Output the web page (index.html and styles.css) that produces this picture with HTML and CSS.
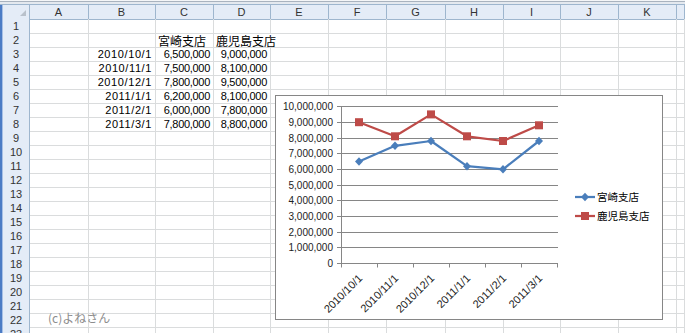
FILE: index.html
```html
<!DOCTYPE html>
<html lang="ja">
<head>
    <meta charset="UTF-8">
    <meta name="viewport" content="width=device-width, initial-scale=1.0">
    <title>支店別売上グラフ</title>
    <link rel="stylesheet" href="styles.css">
</head>
<body>
    <div class="window">
        <div class="top-edge"></div>
        <div class="book">
            <div class="left-edge"></div>
            <div class="sheet">
                <div class="row head">
                    <div class="corner"><span class="select-all"></span></div>
                    <div>A</div><div>B</div><div>C</div><div>D</div><div>E</div><div>F</div><div>G</div><div>H</div><div>I</div><div>J</div><div>K</div><div></div>
                </div>
                <div class="row"><div class="rh">1</div><div></div><div></div><div></div><div></div><div></div><div></div><div></div><div></div><div></div><div></div><div></div><div></div></div>
                <div class="row"><div class="rh">2</div><div></div><div></div><div class="jp">宮崎支店</div><div class="jp spill">鹿児島支店</div><div></div><div></div><div></div><div></div><div></div><div></div><div></div><div></div></div>
                <div class="row"><div class="rh">3</div><div></div><div class="num date">2010/10/1</div><div class="num amt">6,500,000</div><div class="num amt">9,000,000</div><div></div><div></div><div></div><div></div><div></div><div></div><div></div><div></div></div>
                <div class="row"><div class="rh">4</div><div></div><div class="num date">2010/11/1</div><div class="num amt">7,500,000</div><div class="num amt">8,100,000</div><div></div><div></div><div></div><div></div><div></div><div></div><div></div><div></div></div>
                <div class="row"><div class="rh">5</div><div></div><div class="num date">2010/12/1</div><div class="num amt">7,800,000</div><div class="num amt">9,500,000</div><div></div><div></div><div></div><div></div><div></div><div></div><div></div><div></div></div>
                <div class="row"><div class="rh">6</div><div></div><div class="num date">2011/1/1</div><div class="num amt">6,200,000</div><div class="num amt">8,100,000</div><div></div><div></div><div></div><div></div><div></div><div></div><div></div><div></div></div>
                <div class="row"><div class="rh">7</div><div></div><div class="num date">2011/2/1</div><div class="num amt">6,000,000</div><div class="num amt">7,800,000</div><div></div><div></div><div></div><div></div><div></div><div></div><div></div><div></div></div>
                <div class="row"><div class="rh">8</div><div></div><div class="num date">2011/3/1</div><div class="num amt">7,800,000</div><div class="num amt">8,800,000</div><div></div><div></div><div></div><div></div><div></div><div></div><div></div><div></div></div>
                <div class="row"><div class="rh">9</div><div></div><div></div><div></div><div></div><div></div><div></div><div></div><div></div><div></div><div></div><div></div><div></div></div>
                <div class="row"><div class="rh">10</div><div></div><div></div><div></div><div></div><div></div><div></div><div></div><div></div><div></div><div></div><div></div><div></div></div>
                <div class="row"><div class="rh">11</div><div></div><div></div><div></div><div></div><div></div><div></div><div></div><div></div><div></div><div></div><div></div><div></div></div>
                <div class="row"><div class="rh">12</div><div></div><div></div><div></div><div></div><div></div><div></div><div></div><div></div><div></div><div></div><div></div><div></div></div>
                <div class="row"><div class="rh">13</div><div></div><div></div><div></div><div></div><div></div><div></div><div></div><div></div><div></div><div></div><div></div><div></div></div>
                <div class="row"><div class="rh">14</div><div></div><div></div><div></div><div></div><div></div><div></div><div></div><div></div><div></div><div></div><div></div><div></div></div>
                <div class="row"><div class="rh">15</div><div></div><div></div><div></div><div></div><div></div><div></div><div></div><div></div><div></div><div></div><div></div><div></div></div>
                <div class="row"><div class="rh">16</div><div></div><div></div><div></div><div></div><div></div><div></div><div></div><div></div><div></div><div></div><div></div><div></div></div>
                <div class="row"><div class="rh">17</div><div></div><div></div><div></div><div></div><div></div><div></div><div></div><div></div><div></div><div></div><div></div><div></div></div>
                <div class="row"><div class="rh">18</div><div></div><div></div><div></div><div></div><div></div><div></div><div></div><div></div><div></div><div></div><div></div><div></div></div>
                <div class="row"><div class="rh">19</div><div></div><div></div><div></div><div></div><div></div><div></div><div></div><div></div><div></div><div></div><div></div><div></div></div>
                <div class="row"><div class="rh">20</div><div></div><div></div><div></div><div></div><div></div><div></div><div></div><div></div><div></div><div></div><div></div><div></div></div>
                <div class="row"><div class="rh">21</div><div></div><div></div><div></div><div></div><div></div><div></div><div></div><div></div><div></div><div></div><div></div><div></div></div>
                <div class="row"><div class="rh">22</div><div></div><div></div><div></div><div></div><div></div><div></div><div></div><div></div><div></div><div></div><div></div><div></div></div>
                <div class="row"><div class="rh">23</div><div></div><div></div><div></div><div></div><div></div><div></div><div></div><div></div><div></div><div></div><div></div><div></div></div>
            </div>
        </div>

        <!-- floating chart object -->
        <div class="chart">
            <svg width="386" height="223" viewBox="0 0 386 223">
                <defs>
                    <path id="dia" d="M0 -4.2L4 0 0 4.2 -4 0Z"/>
                    <rect id="sq" x="-4" y="-4" width="8" height="8"/>
                </defs>
                <g class="gridlines">
                    <line x1="61" y1="10.5" x2="282" y2="10.5"/>
                    <line x1="61" y1="26.5" x2="282" y2="26.5"/>
                    <line x1="61" y1="42.5" x2="282" y2="42.5"/>
                    <line x1="61" y1="57.5" x2="282" y2="57.5"/>
                    <line x1="61" y1="73.5" x2="282" y2="73.5"/>
                    <line x1="61" y1="89.5" x2="282" y2="89.5"/>
                    <line x1="61" y1="104.5" x2="282" y2="104.5"/>
                    <line x1="61" y1="120.5" x2="282" y2="120.5"/>
                    <line x1="61" y1="136.5" x2="282" y2="136.5"/>
                    <line x1="61" y1="151.5" x2="282" y2="151.5"/>
                    <line x1="61" y1="167.5" x2="282" y2="167.5"/>
                    <line x1="65.5" y1="10" x2="65.5" y2="171.5"/>
                    <line x1="101.5" y1="167.5" x2="101.5" y2="171.5"/>
                    <line x1="137.5" y1="167.5" x2="137.5" y2="171.5"/>
                    <line x1="173.5" y1="167.5" x2="173.5" y2="171.5"/>
                    <line x1="209.5" y1="167.5" x2="209.5" y2="171.5"/>
                    <line x1="245.5" y1="167.5" x2="245.5" y2="171.5"/>
                    <line x1="281.5" y1="167.5" x2="281.5" y2="171.5"/>
                </g>
                <g class="ylab">
                    <text x="57" y="14">10,000,000</text>
                    <text x="57" y="30">9,000,000</text>
                    <text x="57" y="46">8,000,000</text>
                    <text x="57" y="61">7,000,000</text>
                    <text x="57" y="77">6,000,000</text>
                    <text x="57" y="93">5,000,000</text>
                    <text x="57" y="108">4,000,000</text>
                    <text x="57" y="124">3,000,000</text>
                    <text x="57" y="140">2,000,000</text>
                    <text x="57" y="155">1,000,000</text>
                    <text x="57" y="171">0</text>
                </g>
                <g class="xlab">
                    <text x="87" y="183" transform="rotate(-45 87 183)">2010/10/1</text>
                    <text x="123" y="183" transform="rotate(-45 123 183)">2010/11/1</text>
                    <text x="159" y="183" transform="rotate(-45 159 183)">2010/12/1</text>
                    <text x="195" y="183" transform="rotate(-45 195 183)">2011/1/1</text>
                    <text x="231" y="183" transform="rotate(-45 231 183)">2011/2/1</text>
                    <text x="267" y="183" transform="rotate(-45 267 183)">2011/3/1</text>
                </g>

                <!-- 宮崎支店 -->
                <polyline class="series-a" points="83,65.5 119,49.8 155,45 191,70.2 227,73.3 263,45"/>
                <g class="mark-a">
                    <use href="#dia" x="83" y="65.5"/>
                    <use href="#dia" x="119" y="49.8"/>
                    <use href="#dia" x="155" y="45"/>
                    <use href="#dia" x="191" y="70.2"/>
                    <use href="#dia" x="227" y="73.3"/>
                    <use href="#dia" x="263" y="45"/>
                </g>

                <!-- 鹿児島支店 -->
                <polyline class="series-b" points="83,26.2 119,40.3 155,18.4 191,40.3 227,45 263,29.3"/>
                <g class="mark-b">
                    <use href="#sq" x="83" y="26.2"/>
                    <use href="#sq" x="119" y="40.3"/>
                    <use href="#sq" x="155" y="18.4"/>
                    <use href="#sq" x="191" y="40.3"/>
                    <use href="#sq" x="227" y="45"/>
                    <use href="#sq" x="263" y="29.3"/>
                </g>

                <g class="legend">
                    <line class="series-a" x1="299" y1="101" x2="319" y2="101"/>
                    <use class="mark-a" href="#dia" x="309" y="101"/>
                    <text x="321" y="105">宮崎支店</text>
                    <line class="series-b" x1="299" y1="120" x2="319" y2="120"/>
                    <use class="mark-b" href="#sq" x="309" y="120"/>
                    <text x="321" y="124">鹿児島支店</text>
                </g>
            </svg>
        </div>

        <div class="credit">(c)よねさん</div>
    </div>
</body>
</html>
```

FILE: styles.css
```css
:root {
    --grid-color: #dadcdd;
    --head-bg: #e4ecf7;
    --head-line: #9eb6ce;
    --series-a: #4a7ebb;
    --series-b: #be4b48;
}

html, body {
    height: 100%;
    margin: 0;
    overflow: hidden;
    background-color: #ffffff;
    font-family: "Liberation Sans", "Noto Sans CJK JP", sans-serif;
    font-size: 11px;
    color: #000000;
}

.window {
    position: relative;
    height: 100%;
}

.top-edge {
    height: 5px;
    background: linear-gradient(#f4f6f8 0 1px, #a9b3bf 1px 2px, #e4e9ef 2px 4px, #9eb6ce 4px 5px);
}

.book {
    display: flex;
}

.left-edge {
    flex: none;
    width: 3px;
    background: linear-gradient(to right, #4c7cc5 0 2px, #a7c0e6 2px 3px);
}

.sheet {
    flex: 1;
}

.row {
    display: grid;
    grid-template-columns: 27px 59px 67px 58px 57px 58px 58px 59px 58px 57px 58px 58px 1fr;
    height: 14px;
}

.row > div {
    box-sizing: border-box;
    min-width: 0;
    padding: 1px 3px 0 2px;
    border-right: 1px solid var(--grid-color);
    border-bottom: 1px solid var(--grid-color);
    line-height: 13px;
    white-space: nowrap;
}

/* column letters */
.head > div {
    background-color: var(--head-bg);
    border-right-color: var(--head-line);
    border-bottom-color: var(--head-line);
    text-align: center;
    color: #333333;
}

.head > .corner {
    display: flex;
    justify-content: flex-end;
    align-items: flex-end;
    padding: 0 3px 3px 0;
}

.select-all {
    width: 0;
    height: 0;
    border-left: 6px solid transparent;
    border-bottom: 6px solid #b9c1cb;
}

/* row numbers */
.row > .rh {
    padding: 1px 0 0;
    background-color: var(--head-bg);
    border-right-color: var(--head-line);
    border-bottom-color: #bccbdc;
    text-align: center;
    color: #333333;
}

.num {
    text-align: right;
}

.date {
    letter-spacing: .6px;
}

.amt {
    letter-spacing: -.3px;
}

.jp {
    font-family: "Noto Sans CJK JP", sans-serif;
    font-size: 12px;
}

/* text running over into the next empty cell hides the gridline */
.row > .spill {
    border-right-color: transparent;
}

.chart {
    position: absolute;
    left: 275px;
    top: 95px;
    width: 388px;
    height: 225px;
    box-sizing: border-box;
    border: 1px solid #868686;
    background-color: #ffffff;
}

.chart svg {
    display: block;
}

.gridlines line {
    stroke: #868686;
    stroke-width: 1;
}

.chart text {
    font-family: "Liberation Sans", sans-serif;
    font-size: 10px;
    fill: #222222;
}

.ylab text {
    text-anchor: end;
}

.xlab text {
    text-anchor: end;
    font-size: 11px;
}

.series-a, .series-b {
    fill: none;
    stroke-width: 2.25;
    stroke-linejoin: round;
}

.series-a {
    stroke: var(--series-a);
}

.series-b {
    stroke: var(--series-b);
}

.mark-a {
    fill: var(--series-a);
}

.mark-b {
    fill: var(--series-b);
}

.legend text {
    font-family: "Noto Sans CJK JP", sans-serif;
    font-size: 10.5px;
    fill: #000000;
}

.credit {
    position: absolute;
    left: 48px;
    top: 311px;
    font-family: "Noto Sans CJK JP", sans-serif;
    font-size: 12px;
    line-height: 14px;
    color: #8c8c8c;
}
```
